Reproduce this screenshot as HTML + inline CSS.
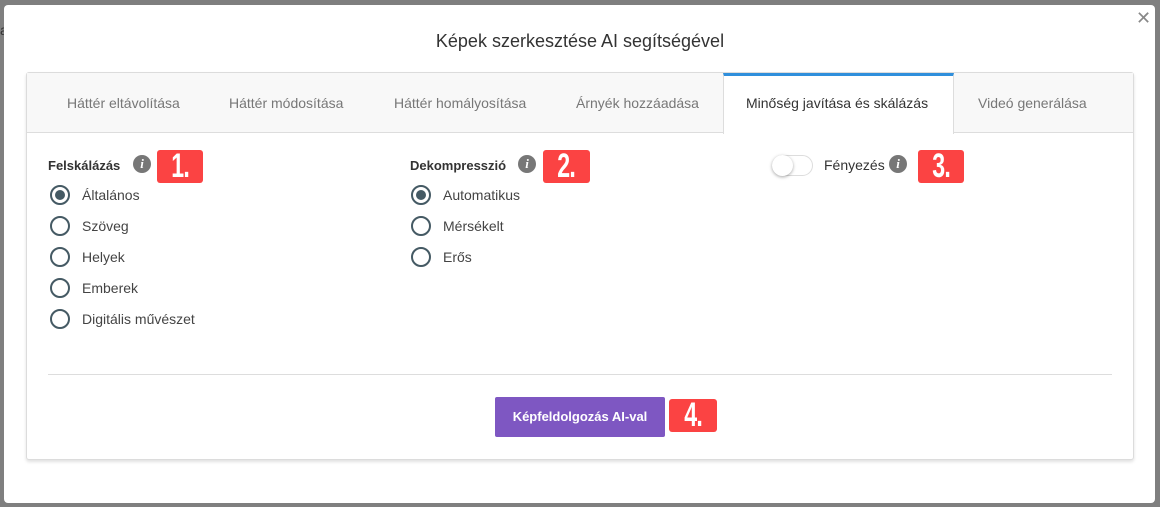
<!DOCTYPE html>
<html><head><meta charset="utf-8"><style>
*{margin:0;padding:0;box-sizing:border-box}
body{width:1160px;height:507px;background:#7f7f7f;position:relative;overflow:hidden;font-family:"Liberation Sans",sans-serif;color:#333}
.a{position:absolute;white-space:nowrap}
#dlg{position:absolute;left:4px;top:5px;width:1151px;height:498px;background:#fff;border-radius:4px}
#panel{position:absolute;left:26px;top:72px;width:1108px;height:388px;background:#fff;border:1px solid #dcdcdc;border-radius:3px;box-shadow:0 2px 3px rgba(0,0,0,.12)}
#tabs{position:absolute;left:0;top:0;width:1106px;height:60px;background:#f8f8f8;border-bottom:1px solid #ddd}
.tab{position:absolute;top:22px;font-size:14px;color:#777}
#act{position:absolute;left:696px;top:0;width:231px;height:61px;background:#fff;border-top:3px solid #2f8fdc;border-left:1px solid #ddd;border-right:1px solid #ddd}
.lbl{font-size:13px;font-weight:bold;color:#333}
.info{position:absolute;width:18px;height:18px;border-radius:50%;background:#777;color:#fff;font:italic bold 13px "Liberation Serif",serif;text-align:center;line-height:18px}
.badge{position:absolute;background:#fb4343;color:#fff;border-radius:3px;text-align:center;height:33px;overflow:hidden}
.badge span{display:inline-block;font:bold 34px "Liberation Sans",sans-serif;line-height:33px;transform:scaleX(.68);letter-spacing:-1px}
.r{position:absolute;width:20px;height:20px;border:2px solid #455a64;border-radius:50%}
.r.on::after{content:"";position:absolute;left:3px;top:3px;width:10px;height:10px;border-radius:50%;background:#455a64}
.rt{font-size:14px;color:#444}
</style></head><body>
<div class="a" style="left:0;top:22px;font-size:14px;color:#333">a</div>
<div id="dlg"></div>
<div class="a" style="left:1136px;top:8px;font-size:18px;color:#888">✕</div>
<div class="a" style="left:0;width:1160px;text-align:center;top:31px;font-size:18px;color:#333">Képek szerkesztése AI segítségével</div>
<div id="panel">
 <div id="tabs">
  <div class="tab" style="left:40px">Háttér eltávolítása</div>
  <div class="tab" style="left:202px">Háttér módosítása</div>
  <div class="tab" style="left:367px">Háttér homályosítása</div>
  <div class="tab" style="left:549px">Árnyék hozzáadása</div>
  <div id="act"></div>
  <div class="tab" style="left:719px;color:#333">Minőség javítása és skálázás</div>
  <div class="tab" style="left:951px">Videó generálása</div>
 </div>
 <div style="position:absolute;left:21px;right:21px;top:301px;height:1px;background:#ddd"></div>
</div>
<div class="a lbl" style="left:48px;top:158px">Felskálázás</div>
<div class="info" style="left:133px;top:155px">i</div>
<div class="badge" style="left:157px;top:150px;width:46px"><span>1.</span></div>
<div class="a lbl" style="left:410px;top:158px">Dekompresszió</div>
<div class="info" style="left:518px;top:155px">i</div>
<div class="badge" style="left:543px;top:150px;width:47px"><span>2.</span></div>
<div style="position:absolute;left:772px;top:155px;width:41px;height:21px;border:1px solid #ddd;border-radius:11px;background:#fff"></div>
<div style="position:absolute;left:772px;top:155px;width:21px;height:21px;border-radius:50%;background:#fff;box-shadow:0 1px 3px rgba(0,0,0,.35)"></div>
<div class="a rt" style="left:824px;top:157px;color:#333">Fényezés</div>
<div class="info" style="left:889px;top:155px">i</div>
<div class="badge" style="left:918px;top:150px;width:46px"><span>3.</span></div>

<div class="r on" style="left:50px;top:185px"></div><div class="a rt" style="left:82px;top:187px">Általános</div>
<div class="r" style="left:50px;top:216px"></div><div class="a rt" style="left:82px;top:218px">Szöveg</div>
<div class="r" style="left:50px;top:247px"></div><div class="a rt" style="left:82px;top:249px">Helyek</div>
<div class="r" style="left:50px;top:278px"></div><div class="a rt" style="left:82px;top:280px">Emberek</div>
<div class="r" style="left:50px;top:309px"></div><div class="a rt" style="left:82px;top:311px">Digitális művészet</div>

<div class="r on" style="left:411px;top:185px"></div><div class="a rt" style="left:443px;top:187px">Automatikus</div>
<div class="r" style="left:411px;top:216px"></div><div class="a rt" style="left:443px;top:218px">Mérsékelt</div>
<div class="r" style="left:411px;top:247px"></div><div class="a rt" style="left:443px;top:249px">Erős</div>

<div style="position:absolute;left:495px;top:397px;width:170px;height:40px;background:#7e57c2;border-radius:2px;color:#fff;font-size:13px;font-weight:bold;text-align:center;line-height:40px">Képfeldolgozás AI-val</div>
<div class="badge" style="left:669px;top:399px;width:48px"><span>4.</span></div>
</body></html>
